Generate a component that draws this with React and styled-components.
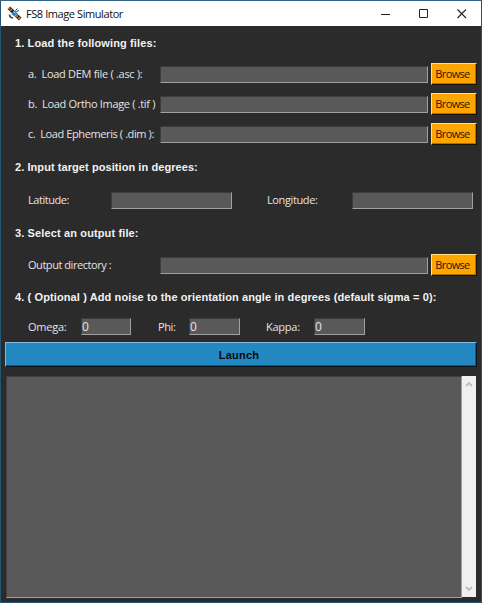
import React from 'react';
import styled, { createGlobalStyle } from 'styled-components';

const Global = createGlobalStyle`
  * { box-sizing: border-box; }
  body { margin: 0; overflow: hidden; }
`;

const Window = styled.div`
  width: 482px;
  height: 603px;
  display: flex;
  flex-direction: column;
  background: #2b2b2b;
  border: 1px solid #25566f;
  border-top-color: #33658a;
  font-family: 'Open Sans', 'Noto Sans', sans-serif;
  font-size: 11px;
  color: #e4e4e4;
`;

const TitleBar = styled.header`
  height: 25px;
  flex: none;
  display: flex;
  align-items: center;
  background: #fff;
  color: #111;
  padding-left: 6px;
`;

const Title = styled.h1`
  margin: 0 auto 0 4px;
  font-size: 11px;
  font-weight: 400;
  line-height: 24px;
  white-space: nowrap;
  letter-spacing: -0.42px;
`;

const Controls = styled.div`
  display: flex;
  gap: 28px;
  padding-right: 14px;
  svg { display: block; }
`;

const Heading = styled.h2`
  margin: 0;
  height: ${(p) => p.$h}px;
  flex: none;
  padding-left: 14px;
  font: bold 11px 'Liberation Sans', Arial, sans-serif;
  line-height: ${(p) => p.$line || p.$h}px;
  letter-spacing: ${(p) => p.$track || 0}px;
  color: #f2f2f2;
  white-space: pre;
`;

const Row = styled.div`
  height: 30px;
  flex: none;
  display: flex;
  align-items: center;
  padding-left: 27px;
`;

const NoiseRow = styled(Row)`
  height: 27px;
  padding-bottom: 2px;
`;

const Label = styled.label`
  width: ${(p) => p.$w}px;
  flex: none;
  line-height: 16px;
  white-space: pre;
  letter-spacing: ${(p) => p.$track || 0}px;
`;

const Field = styled.div`
  width: ${(p) => p.$w}px;
  margin-right: ${(p) => p.$gap || 0}px;
  height: 17px;
  flex: none;
  line-height: 15px;
  font-size: 12px;
  background: #595959;
  border: 1px solid;
  border-color: #3c3c3c #a0a0a0 #a0a0a0 #3c3c3c;
`;

const Browse = styled.button`
  width: 46px;
  height: 22px;
  padding: 0 3px 0 0;
  border: 1px solid;
  border-color: #ffe08a #1a1200 #1a1200 #ffe08a;
  box-shadow: inset -1px -1px #a97000;
  background: #ffa500;
  color: #241800;
  font: 11px/18px 'Open Sans', sans-serif;
  letter-spacing: -0.65px;
`;

const Launch = styled.button`
  margin: 1px 4px 0;
  height: 25px;
  flex: none;
  padding: 0 4px 0 0;
  border: 1px solid;
  border-color: #86b9e0 #06121a #06121a #86b9e0;
  box-shadow: inset -1px -1px #17567d;
  background: #2388c2;
  color: #050a10;
  font: bold 11px 'Liberation Sans', Arial, sans-serif;
  letter-spacing: 0.2px;
`;

const Output = styled.div`
  margin: 9px 5px 4px;
  flex: 1;
  display: flex;
`;

const Log = styled.div`
  flex: 1;
  background: #595959;
  border: 1px solid;
  border-color: #404040 #a0a0a0 #a0a0a0 #404040;
`;

const ScrollBar = styled.div`
  width: 14px;
  display: flex;
  flex-direction: column;
  justify-content: space-between;
  align-items: center;
  padding: 5px 0;
  margin-bottom: 1px;
  background: #f0f0f0;
`;

const Satellite = () => (
  <svg width="15" height="15" viewBox="0 0 15 15">
    <path d="M0.500 3 3 .5 7.500 4.500 5 7.500Z" fill="#3a2a14" />
    <path d="M1.500 3 3 1.800 M3.200 4.700 4.800 3.300" stroke="#c9964a" strokeWidth="1.200" />
    <path d="M8 10.500 10.500 8 14.500 11.500 12 14.500Z" fill="#3a2a14" />
    <path d="M9.500 10.800 10.800 9.600 M11.500 12.700 13 11.300" stroke="#d8a24a" strokeWidth="1.300" />
    <path d="M4.500 8 8 4.500 10.500 7.500 7.500 10.500Z" fill="#2380cf" />
    <path d="M7 6 8.500 7.500" stroke="#9bd4f5" />
    <path d="M8.500 4.500 10.500 2.500 M9.500 5.500 12 4.500" stroke="#333" />
    <path d="M2.500 8.500 Q2.500 11.500 6 12" fill="none" stroke="#444" strokeWidth="1.600" />
  </svg>
);

const Arrow = ({ down }) => (
  <svg width="8" height="6" viewBox="0 0 8 6">
    <path d={down ? 'M1 1 4 4 7 1' : 'M1 5 4 2 7 5'} fill="none" stroke="#bdbdbd" strokeWidth="1.900" />
  </svg>
);

const files = [
  ['a.  Load DEM file ( .asc ):', -0.3],
  ['b.  Load Ortho Image ( .tif )', -0.32],
  ['c.  Load Ephemeris ( .dim ):', -0.4],
];

export default function App() {
  return (
    <>
      <Global />
      <Window>
        <TitleBar>
          <Satellite />
          <Title>FS8 Image Simulator</Title>
          <Controls>
            <svg width="10" height="10"><path d="M0 5.500H9" stroke="#222" /></svg>
            <svg width="10" height="10"><path d="M.5.500H8.500V8.500H.5Z" fill="none" stroke="#222" /></svg>
            <svg width="10" height="10"><path d="M.5.500 9 9M9 .5.500 9" stroke="#222" strokeWidth="1.100" /></svg>
          </Controls>
        </TitleBar>
        <Heading $h={33} $line={35} $track={0.12}>1. Load the following files:</Heading>
        {files.map(([text, track]) => (
          <Row key={text}>
            <Label $w={132} $track={track}>{text}</Label>
            <Field $w={268} $gap={3} />
            <Browse>Browse</Browse>
          </Row>
        ))}
        <Heading $h={36} $track={0.07}>2. Input target position in degrees:</Heading>
        <Row>
          <Label $w={83} $track={-0.45}>Latitude:</Label>
          <Field $w={121} $gap={35} />
          <Label $w={85} $track={-0.38}>Longitude:</Label>
          <Field $w={121} />
        </Row>
        <Heading $h={35} $line={36} $track={0.13}>3. Select an output file:</Heading>
        <Row>
          <Label $w={132} $track={-0.45}>Output directory :</Label>
          <Field $w={268} $gap={3} />
          <Browse>Browse</Browse>
        </Row>
        <Heading $h={34} $track={0.11}>4. ( Optional ) Add noise to the orientation angle in degrees (default sigma = 0):</Heading>
        <NoiseRow>
          <Label $w={53} $track={-0.25}>Omega:</Label>
          <Field $w={50} $gap={27}>0</Field>
          <Label $w={31} $track={-0.4}>Phi:</Label>
          <Field $w={51} $gap={26}>0</Field>
          <Label $w={48} $track={-0.25}>Kappa:</Label>
          <Field $w={51}>0</Field>
        </NoiseRow>
        <Launch>Launch</Launch>
        <Output>
          <Log />
          <ScrollBar>
            <Arrow />
            <Arrow down />
          </ScrollBar>
        </Output>
      </Window>
    </>
  );
}
